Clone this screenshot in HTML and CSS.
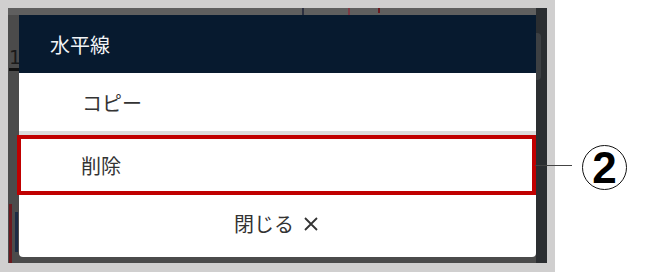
FILE: index.html
```html
<!DOCTYPE html>
<html lang="ja">
<head>
<meta charset="utf-8">
<link rel="stylesheet" href="styles.css">
</head>
<body>
<div class="page">
  <div class="shot">
    <div class="chart">
      <div class="top-strip"></div>
      <div class="right-strip"><div class="scroll-thumb"></div></div>
      <span class="axis-label">1</span>
      <div class="candle c1"></div>
      <div class="candle c2"></div>
      <div class="candle c3"></div>
      <div class="candle c4"></div>
      <div class="candle c5"></div>
      <div class="modal">
        <div class="modal-head">水平線</div>
        <div class="modal-row">コピー</div>
        <div class="sep"></div>
        <div class="modal-row del">削除</div>
        <div class="modal-close">閉じる<svg class="x-icon" width="14" height="14" viewBox="0 0 14 14"><path d="M1 1 L13 13 M13 1 L1 13" stroke="#333" stroke-width="1.8" fill="none"/></svg></div>
      </div>
      <div class="highlight"></div>
    </div>
  </div>
  <div class="callout-line"></div>
  <div class="callout">2</div>
</div>
</body>
</html>
```
FILE: styles.css
```css
html, body {
  margin: 0;
  padding: 0;
  background: #ffffff;
}
body {
  width: 658px;
  height: 272px;
  font-family: "Noto Sans CJK JP", "Noto Sans", sans-serif;
}
.page {
  position: relative;
  width: 658px;
  height: 272px;
}
.shot {
  width: 539px;
  height: 255px;
  border: 8px solid #d0cfcf;
  border-bottom-width: 9px;
}
.chart {
  position: relative;
  width: 539px;
  height: 255px;
  background: #4b4b4b;
  overflow: hidden;
}
.top-strip {
  position: absolute;
  left: 0;
  top: 0;
  width: 528px;
  height: 7px;
  background: #5f5f5f;
}
.right-strip {
  position: absolute;
  right: 0;
  top: 0;
  width: 11px;
  height: 255px;
  background: #2b2e31;
}
.scroll-thumb {
  position: absolute;
  left: 0;
  top: 25px;
  width: 5px;
  height: 47px;
  background: #3d4043;
  border-radius: 0 4px 4px 0;
}
.axis-label {
  position: absolute;
  left: 1px;
  top: 38px;
  font-family: "DejaVu Sans", sans-serif;
  font-size: 19px;
  line-height: 22px;
  color: #1a1a1a;
  border-bottom: 3px solid #111;
  padding-right: 2px;
}
.candle {
  position: absolute;
  width: 3px;
}
.c1 { left: 1px; top: 196px; height: 59px; background: #6a1a1f; }
.c2 { left: 7px; top: 204px; height: 40px; background: #1c2b44; }
.c3 { left: 294px; top: 0; height: 7px; background: #2c3040; width: 2px; }
.c4 { left: 370px; top: 0; height: 5px; background: #6a1a1f; width: 2px; }
.c5 { left: 340px; top: 0; height: 7px; background: #7b3b44; width: 2px; }
.modal {
  position: absolute;
  left: 11px;
  top: 7px;
  width: 517px;
  height: 242px;
  background: #ffffff;
  border-radius: 0 0 4px 4px;
  overflow: hidden;
  display: flex;
  flex-direction: column;
  color: #333333;
  font-size: 20px;
}
.modal-head {
  height: 58px;
  background: #071a2f;
  color: #f2f4f6;
  display: flex;
  align-items: center;
  padding-left: 31px;
  font-size: 20px;
}
.modal-row {
  height: 58px;
  display: flex;
  align-items: center;
  padding-left: 63px;
}
.modal-row.del {
  height: 60px;
  padding-left: 62px;
}
.sep {
  height: 4px;
  background: #dcdcdc;
}
.modal-close {
  flex: 1;
  display: flex;
  align-items: center;
  justify-content: center;
  gap: 10px;
  padding-bottom: 6px;
  padding-right: 3px;
}
.x-icon {
  display: block;
  margin-top: 2px;
}
.highlight {
  position: absolute;
  left: 9px;
  top: 127px;
  width: 511px;
  height: 52px;
  border: 4px solid #c00000;
}
.callout-line {
  position: absolute;
  left: 535px;
  top: 165px;
  width: 37px;
  height: 1px;
  background: #444;
}
.callout {
  position: absolute;
  left: 582px;
  top: 145px;
  width: 43px;
  height: 43px;
  border: 1.5px solid #111;
  border-radius: 50%;
  display: flex;
  align-items: center;
  justify-content: center;
  font-family: "Liberation Sans", Arial, sans-serif;
  font-weight: bold;
  font-size: 44px;
  color: #000;
  line-height: 1;
}
```
